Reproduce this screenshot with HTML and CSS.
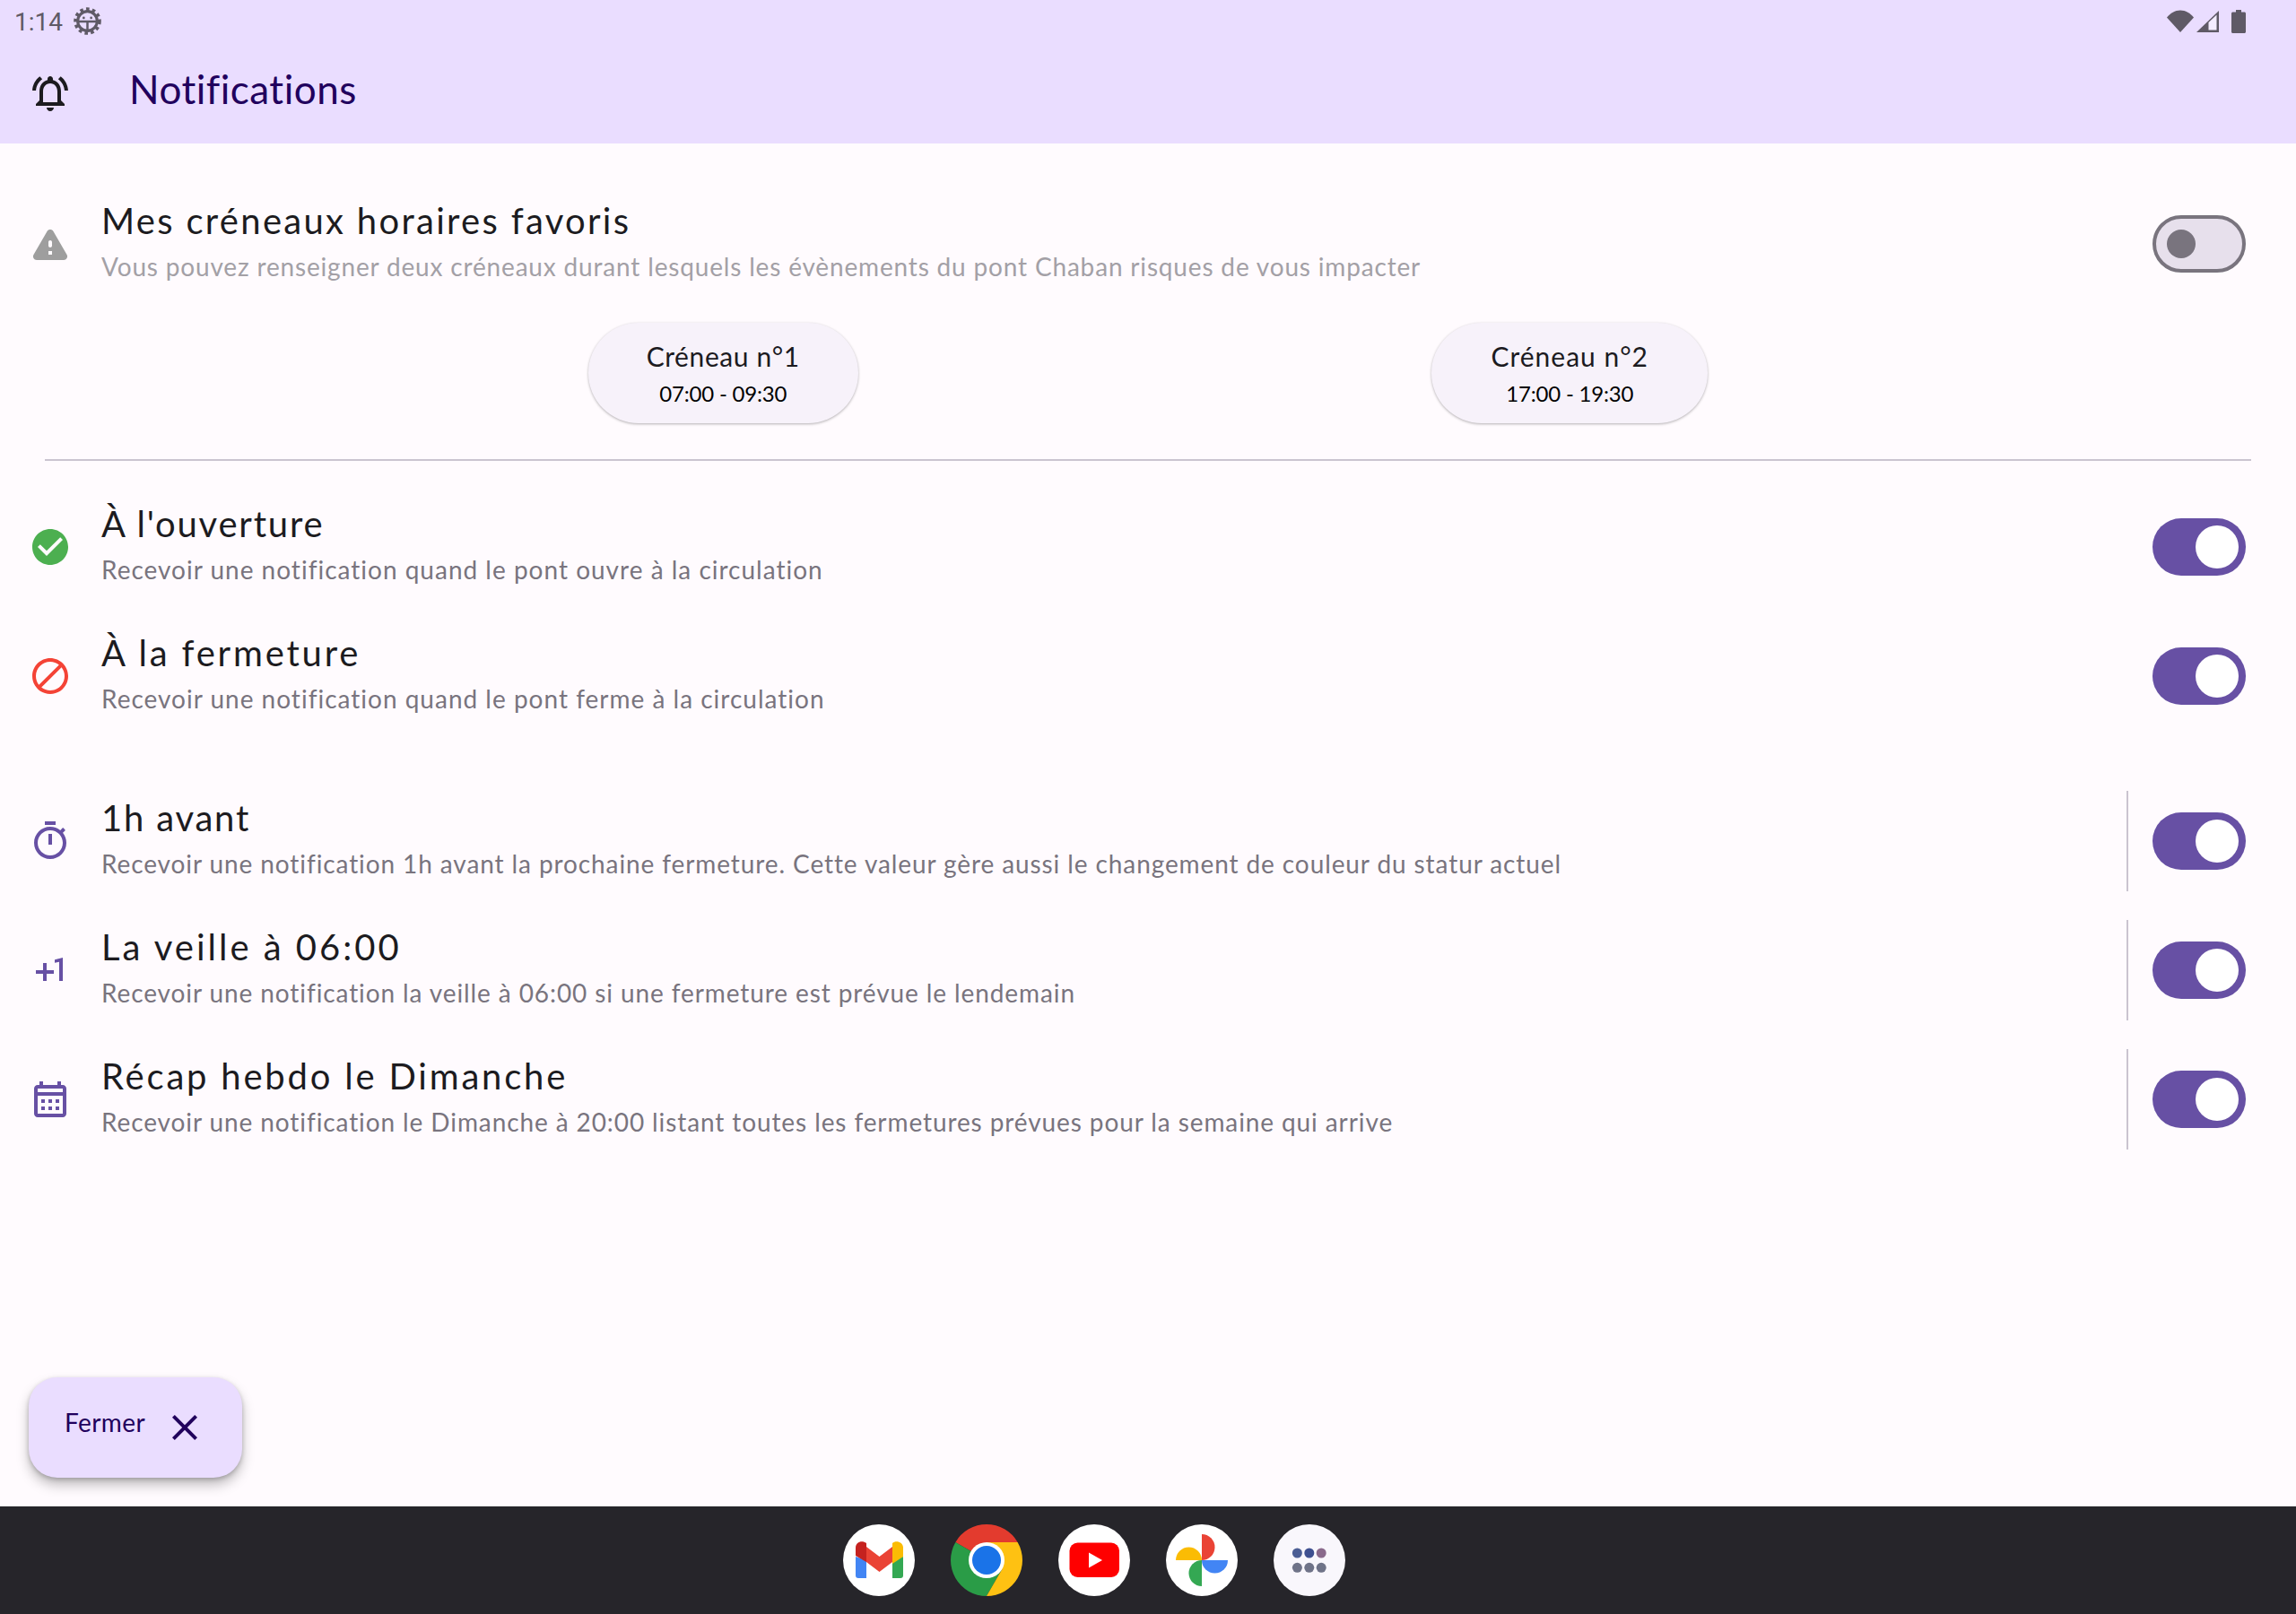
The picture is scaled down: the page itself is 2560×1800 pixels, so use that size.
FILE: index.html
```html
<!DOCTYPE html>
<html lang="fr">
<head>
<meta charset="utf-8">
<title>Notifications</title>
<link rel="stylesheet" href="styles.css">
</head>
<body>
<div class="screen">
  <header class="top">
    <div class="status">
      <div class="status-left">
        <span class="time">1:14</span>
        <svg class="gear" viewBox="0 0 30 30"><circle cx="15" cy="15" r="12.6" fill="none" stroke="#5f5a66" stroke-width="4.4" stroke-dasharray="3.4 3"/><circle cx="15" cy="15" r="10.5" fill="none" stroke="#5f5a66" stroke-width="3"/><path d="M5 15.5h20M15 16v9" stroke="#5f5a66" stroke-width="2.4" fill="none"/><circle cx="11" cy="11.5" r="1.3" fill="#5f5a66"/><circle cx="19" cy="11.5" r="1.3" fill="#5f5a66"/></svg>
      </div>
      <div class="status-right">
        <svg class="st-wifi" viewBox="0 0 30 25"><path d="M0 8.500C4 3.500 9 .5 15 .5s11 3 15 8L15 25z" fill="#5f5a66"/></svg>
        <svg class="st-signal" viewBox="0 0 25 24"><path d="M0 24L25 0v24z" fill="#5f5a66"/><path d="M13.500 21.500V13l9-8.500v17z" fill="#f4edff"/></svg>
        <svg class="st-batt" viewBox="0 0 16 26"><path d="M5 0h6v2.500h3.500c.8 0 1.500.7 1.500 1.500v20.500c0 .8-.7 1.500-1.500 1.500h-13C.7 26 0 25.300 0 24.500V4c0-.8.7-1.500 1.500-1.500H5z" fill="#5f5a66"/></svg>
      </div>
    </div>
    <div class="appbar">
      <svg class="icon icon-dark" viewBox="0 0 24 24"><path d="M18 16v-5c0-3.070-1.630-5.640-4.500-6.320V4c0-.83-.67-1.500-1.500-1.500s-1.500.67-1.500 1.500v.68C7.640 5.360 6 7.920 6 11v5l-2 2v1h16v-1l-2-2zm-2 1H8v-6c0-2.480 1.510-4.500 4-4.500s4 2.020 4 4.500v6zm-4 5c1.100 0 2-.9 2-2h-4c0 1.100.89 2 2 2zM7.580 4.080L6.150 2.650C3.750 4.480 2.170 7.300 2.030 10.500h2c.15-2.650 1.510-4.970 3.550-6.420zM19.970 10.500h2c-.15-3.200-1.730-6.020-4.120-7.850l-1.420 1.430c2.020 1.450 3.390 3.770 3.540 6.420z"/></svg>
      <h1 class="apptitle">Notifications</h1>
    </div>
  </header>

  <main class="content">
    <section class="row">
      <svg class="icon icon-grey" viewBox="0 0 24 24"><path d="M4.470 21h15.060c1.540 0 2.500-1.670 1.730-3L13.730 4.990c-.77-1.330-2.690-1.330-3.460 0L2.740 18c-.77 1.330.19 3 1.730 3zM12 14c-.55 0-1-.45-1-1v-2c0-.55.45-1 1-1s1 .45 1 1v2c0 .55-.45 1-1 1zm1 4h-2v-2h2v2z"/></svg>
      <div class="text">
        <div class="title title-lead">Mes créneaux horaires favoris</div>
        <div class="sub sub-off">Vous pouvez renseigner deux créneaux durant lesquels les évènements du pont Chaban risques de vous impacter</div>
      </div>
      <div class="switch switch-off"><span class="thumb"></span></div>
    </section>

    <div class="slots">
      <button class="slot slot-first"><span class="slot-name">Créneau n°1</span><span class="slot-time">07:00 - 09:30</span></button>
      <button class="slot slot-second"><span class="slot-name">Créneau n°2</span><span class="slot-time">17:00 - 19:30</span></button>
    </div>

    <hr class="divider">

    <section class="row">
      <svg class="icon icon-green" viewBox="0 0 24 24"><path d="M12 2C6.480 2 2 6.480 2 12s4.480 10 10 10 10-4.480 10-10S17.520 2 12 2zm-2 15l-5-5 1.410-1.410L10 14.170l7.590-7.590L19 8l-9 9z"/></svg>
      <div class="text">
        <div class="title title-tight">À l'ouverture</div>
        <div class="sub sub-wide">Recevoir une notification quand le pont ouvre à la circulation</div>
      </div>
      <div class="switch switch-on"><span class="thumb"></span></div>
    </section>
    <section class="row">
      <svg class="icon icon-red" viewBox="0 0 24 24"><path d="M12 2C6.480 2 2 6.480 2 12s4.480 10 10 10 10-4.480 10-10S17.520 2 12 2zM4 12c0-4.420 3.580-8 8-8 1.850 0 3.550.63 4.900 1.690L5.690 16.900C4.630 15.550 4 13.850 4 12zm8 8c-1.850 0-3.550-.63-4.900-1.690L18.310 7.100C19.370 8.450 20 10.150 20 12c0 4.420-3.580 8-8 8z"/></svg>
      <div class="text">
        <div class="title">À la fermeture</div>
        <div class="sub sub-wide">Recevoir une notification quand le pont ferme à la circulation</div>
      </div>
      <div class="switch switch-on"><span class="thumb"></span></div>
    </section>

    <div class="group">
      <section class="row">
        <svg class="icon icon-primary" viewBox="0 0 24 24"><path d="M15 1H9v2h6V1zm-4 13h2V8h-2v6zm8.030-6.610l1.420-1.420c-.43-.51-.9-.99-1.410-1.410l-1.420 1.420C16.070 4.740 14.120 4 12 4c-4.970 0-9 4.030-9 9s4.020 9 9 9 9-4.030 9-9c0-2.120-.74-4.070-1.970-5.610zM12 20c-3.870 0-7-3.130-7-7s3.130-7 7-7 7 3.130 7 7-3.130 7-7 7z"/></svg>
        <div class="text">
          <div class="title title-tight">1h avant</div>
          <div class="sub">Recevoir une notification 1h avant la prochaine fermeture. Cette valeur gère aussi le changement de couleur du statur actuel</div>
        </div>
        <span class="vrule"></span>
        <div class="switch switch-on"><span class="thumb"></span></div>
      </section>
      <section class="row">
        <svg class="icon icon-primary" viewBox="0 0 24 24"><path d="M10 8H8v4H4v2h4v4h2v-4h4v-2h-4zm4.500-1.920V7.900l2.500-.5V18h2V5z"/></svg>
        <div class="text">
          <div class="title title-wide">La veille à 06:00</div>
          <div class="sub">Recevoir une notification la veille à 06:00 si une fermeture est prévue le lendemain</div>
        </div>
        <span class="vrule"></span>
        <div class="switch switch-on"><span class="thumb"></span></div>
      </section>
      <section class="row">
        <svg class="icon icon-primary" viewBox="0 0 24 24"><path d="M19 4h-1V2h-2v2H8V2H6v2H5c-1.100 0-2 .9-2 2v14c0 1.100.9 2 2 2h14c1.100 0 2-.9 2-2V6c0-1.100-.9-2-2-2zm0 16H5V10h14v10zm0-12H5V6h14v2zM9 14H7v-2h2v2zm4 0h-2v-2h2v2zm4 0h-2v-2h2v2zm-8 4H7v-2h2v2zm4 0h-2v-2h2v2zm4 0h-2v-2h2v2z"/></svg>
        <div class="text">
          <div class="title">Récap hebdo le Dimanche</div>
          <div class="sub">Recevoir une notification le Dimanche à 20:00 listant toutes les fermetures prévues pour la semaine qui arrive</div>
        </div>
        <span class="vrule"></span>
        <div class="switch switch-on"><span class="thumb"></span></div>
      </section>
    </div>

    <button class="fab">
      <span class="fab-label">Fermer</span>
      <svg class="icon icon-navy" viewBox="0 0 24 24"><path d="M19 6.410L17.590 5 12 10.590 6.410 5 5 6.410 10.590 12 5 17.590 6.410 19 12 13.410 17.590 19 19 17.590 13.410 12z"/></svg>
    </button>
  </main>

  <footer class="dock">
    <svg class="app" viewBox="0 0 80 80">
      <circle cx="40" cy="40" r="40" fill="#fff"/>
      <path d="M14 36v21a3 3 0 0 0 3 3h9V40z" fill="#4285f4"/>
      <path d="M67 36v21a3 3 0 0 1-3 3h-9V40z" fill="#34a853"/>
      <path d="M26 25l14.500 11L55 25v17L40.500 53 26 42z" fill="#ea4335"/>
      <path d="M14 35v-9c0-6 7-9 12-5v21z" fill="#c5221f"/>
      <path d="M55 21c4-4 12-1 12 5v10l-12 8z" fill="#fbbc04"/>
    </svg>
    <svg class="app" viewBox="0 0 80 80">
      <path d="M40 0A40 40 0 0 1 74.640 20H40L22.680 30 5.360 20A40 40 0 0 1 40 0z" fill="#e33b2e"/>
      <path d="M5.360 20L22.680 30 40 60l17.320-10L40 80A40 40 0 0 1 5.360 20z" fill="#2a9c47"/>
      <path d="M74.640 20A40 40 0 0 1 40 80l17.320-30L40 20z" fill="#fec112"/>
      <circle cx="40" cy="40" r="20" fill="#fff"/>
      <circle cx="40" cy="40" r="16" fill="#1a73e8"/>
    </svg>
    <svg class="app" viewBox="0 0 80 80">
      <circle cx="40" cy="40" r="40" fill="#fff"/>
      <rect x="12.500" y="20.500" width="55.500" height="38.500" rx="9" fill="#f00"/>
      <path d="M34 31.500L49 40 34 48.500z" fill="#fff"/>
    </svg>
    <svg class="app" viewBox="0 0 80 80">
      <circle cx="40" cy="40" r="40" fill="#fff"/>
      <path d="M40 11a14.500 14.500 0 0 1 0 29z" fill="#ea4335"/>
      <path d="M11 40a14.500 14.500 0 0 1 29 0z" fill="#fbbc04"/>
      <path d="M69 40a14.500 14.500 0 0 1-29 0z" fill="#4285f4"/>
      <path d="M40 69a14.500 14.500 0 0 1 0-29z" fill="#34a853"/>
    </svg>
    <svg class="app" viewBox="0 0 80 80">
      <circle cx="40" cy="40" r="40" fill="#f9f7fc"/>
      <circle cx="26.400" cy="32" r="5.500" fill="#4b5e94"/>
      <circle cx="39.800" cy="32" r="5.500" fill="#3e5090"/>
      <circle cx="53.200" cy="32" r="5.500" fill="#8a6a8c"/>
      <circle cx="26.400" cy="48.300" r="5.500" fill="#6f7388"/>
      <circle cx="39.800" cy="48.300" r="5.500" fill="#6f7388"/>
      <circle cx="53.200" cy="48.300" r="5.500" fill="#6f7388"/>
    </svg>
  </footer>
</div>
</body>
</html>
```

FILE: styles.css
```css
* { box-sizing: border-box; }
html, body { margin: 0; padding: 0; }
body { background: #fffbfe; font-family: "Lato", "Liberation Sans", sans-serif; color: #1c1b1f; }

.screen { width: 2560px; height: 1800px; display: flex; flex-direction: column; overflow: hidden; }

.top { background: #eaddff; height: 160px; display: flex; flex-direction: column; flex: none; }
.status { height: 48px; display: flex; justify-content: space-between; align-items: flex-start; padding: 0 56px 0 16px; }
.status-left { display: flex; align-items: center; height: 50px; gap: 12px; }
.time { font-family: "Roboto", sans-serif; font-size: 28px; color: #5f5a66; line-height: 50px; }
.gear { width: 31px; height: 31px; margin-top: -3px; }
.status-right { display: flex; align-items: flex-start; padding-top: 11px; }
.st-wifi { width: 30px; height: 25px; }
.st-signal { width: 25px; height: 24px; margin-left: 3px; margin-top: 1px; }
.st-batt { width: 16px; height: 26px; margin-left: 14px; }

.appbar { height: 112px; display: flex; align-items: center; padding-left: 32px; }
.apptitle { margin: 0 0 10px 64px; font-size: 44px; font-weight: 400; color: #21005d; letter-spacing: 0.5px; line-height: 56px; }

.icon { width: 48px; height: 48px; flex: none; display: block; }
.icon-dark { fill: #1c1b1f; }
.icon-grey { fill: #9e9e9e; }
.icon-green { fill: #4caf50; }
.icon-red { fill: #f44336; }
.icon-primary { fill: #6750a4; }
.icon-navy { fill: #21005d; }

.content { flex: 1; position: relative; padding-top: 40px; }

.row { height: 144px; display: flex; align-items: center; padding: 0 56px 0 32px; }
.text { flex: 1; margin-left: 33px; padding-bottom: 8px; }
.title { font-size: 40px; line-height: 52px; letter-spacing: 2.8px; color: #1c1b1f; }
.title-lead { letter-spacing: 2.3px; }
.title-tight { letter-spacing: 1.8px; }
.title-wide { letter-spacing: 3px; }
.sub { font-size: 28px; line-height: 40px; letter-spacing: 0.9px; color: #79747e; margin-top: 5px; }
.sub-wide { letter-spacing: 1px; }
.sub-off { color: #a3a0a6; letter-spacing: 0.83px; }

.switch { width: 104px; height: 64px; border-radius: 32px; display: flex; align-items: center; flex: none; }
.switch-on { background: #6750a4; justify-content: flex-end; padding-right: 8px; }
.switch-on .thumb { width: 48px; height: 48px; border-radius: 50%; background: #fff; }
.switch-off { background: #e7e0ec; border: 4px solid #79747e; padding-left: 12px; }
.switch-off .thumb { width: 32px; height: 32px; border-radius: 50%; background: #79747e; }

.vrule { width: 2px; height: 112px; background: #cac4d0; margin-right: 27px; flex: none; }

.slots { display: flex; justify-content: space-around; padding: 0 336px; margin-top: 16px; }
.slot { height: 112px; border: 0; border-radius: 56px; background: #f7f2fa; box-shadow: 0 1px 3px rgba(0,0,0,.3); display: flex; flex-direction: column; align-items: center; justify-content: center; font-family: inherit; padding: 0; }
.slot-first { width: 301px; }
.slot-second { width: 308px; }
.slot-second .slot-name { letter-spacing: 1px; }
.slot-name { font-size: 30px; line-height: 40px; color: #1c1b1f; letter-spacing: 0.6px; }
.slot-time { font-size: 24px; line-height: 32px; color: #000; margin-top: 6px; letter-spacing: -0.2px; }

.divider { border: 0; height: 2px; background: #cac4d0; margin: 40px 50px 24px; }
.group { margin-top: 40px; }

.fab { position: absolute; left: 32px; bottom: 32px; width: 238px; height: 112px; border: 0; border-radius: 32px; background: #eaddff; box-shadow: 0 8px 14px rgba(0,0,0,.25), 0 2px 5px rgba(0,0,0,.2); display: flex; align-items: center; padding: 0 0 0 40px; font-family: inherit; }
.fab-label { font-size: 28px; color: #21005d; letter-spacing: 0.4px; width: 110px; text-align: left; margin-bottom: 12px; }

.dock { height: 120px; flex: none; background: #26252a; display: flex; justify-content: center; align-items: center; gap: 40px; padding-right: 120px; }
.app { width: 80px; height: 80px; display: block; }
```
